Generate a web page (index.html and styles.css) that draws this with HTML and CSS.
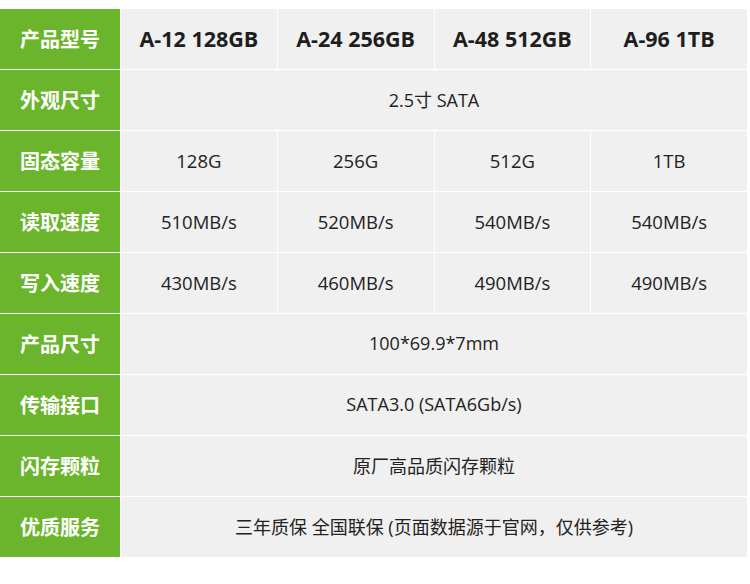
FILE: index.html
```html
<!DOCTYPE html>
<html lang="zh-CN">
<head>
<meta charset="utf-8">
<link rel="stylesheet" href="styles.css">
</head>
<body>
<div class="spec">
  <div class="label">产品型号</div>
  <div class="cell head">A-12 128GB</div>
  <div class="cell head">A-24 256GB</div>
  <div class="cell head">A-48 512GB</div>
  <div class="cell head">A-96 1TB</div>

  <div class="label">外观尺寸</div>
  <div class="cell span">2.5寸 SATA</div>

  <div class="label">固态容量</div>
  <div class="cell">128G</div>
  <div class="cell">256G</div>
  <div class="cell">512G</div>
  <div class="cell">1TB</div>

  <div class="label">读取速度</div>
  <div class="cell">510MB/s</div>
  <div class="cell">520MB/s</div>
  <div class="cell">540MB/s</div>
  <div class="cell">540MB/s</div>

  <div class="label">写入速度</div>
  <div class="cell">430MB/s</div>
  <div class="cell">460MB/s</div>
  <div class="cell">490MB/s</div>
  <div class="cell">490MB/s</div>

  <div class="label">产品尺寸</div>
  <div class="cell span">100*69.9*7mm</div>

  <div class="label">传输接口</div>
  <div class="cell span">SATA3.0 (SATA6Gb/s)</div>

  <div class="label">闪存颗粒</div>
  <div class="cell span">原厂高品质闪存颗粒</div>

  <div class="label">优质服务</div>
  <div class="cell span">三年质保 全国联保 (页面数据源于官网，仅供参考)</div>
</div>
</body>
</html>
```

FILE: styles.css
```css
html, body {
  margin: 0;
  padding: 0;
  background: #ffffff;
}

body {
  font-family: "Open Sans", "Noto Sans CJK SC", sans-serif;
  color: #222222;
}

.spec {
  margin-top: 9px;
  width: 747px;
  display: grid;
  grid-template-columns: 120px repeat(4, 1fr);
  grid-auto-rows: 60px;
  gap: 1px;
  background: #ffffff;
}

.label {
  background: #6bb52c;
  color: #ffffff;
  font-family: "Noto Sans CJK SC", sans-serif;
  font-weight: 700;
  font-size: 20px;
  display: flex;
  align-items: center;
  justify-content: center;
  padding-bottom: 1px;
}

.cell {
  background: #f0f0f0;
  font-size: 18.5px;
  display: flex;
  align-items: center;
  justify-content: center;
  white-space: nowrap;
  padding-bottom: 2px;
}

.head {
  font-weight: 700;
  font-size: 21.5px;
  color: #1e1e1e;
}

.span {
  grid-column: span 4;
  font-size: 18px;
}
```
